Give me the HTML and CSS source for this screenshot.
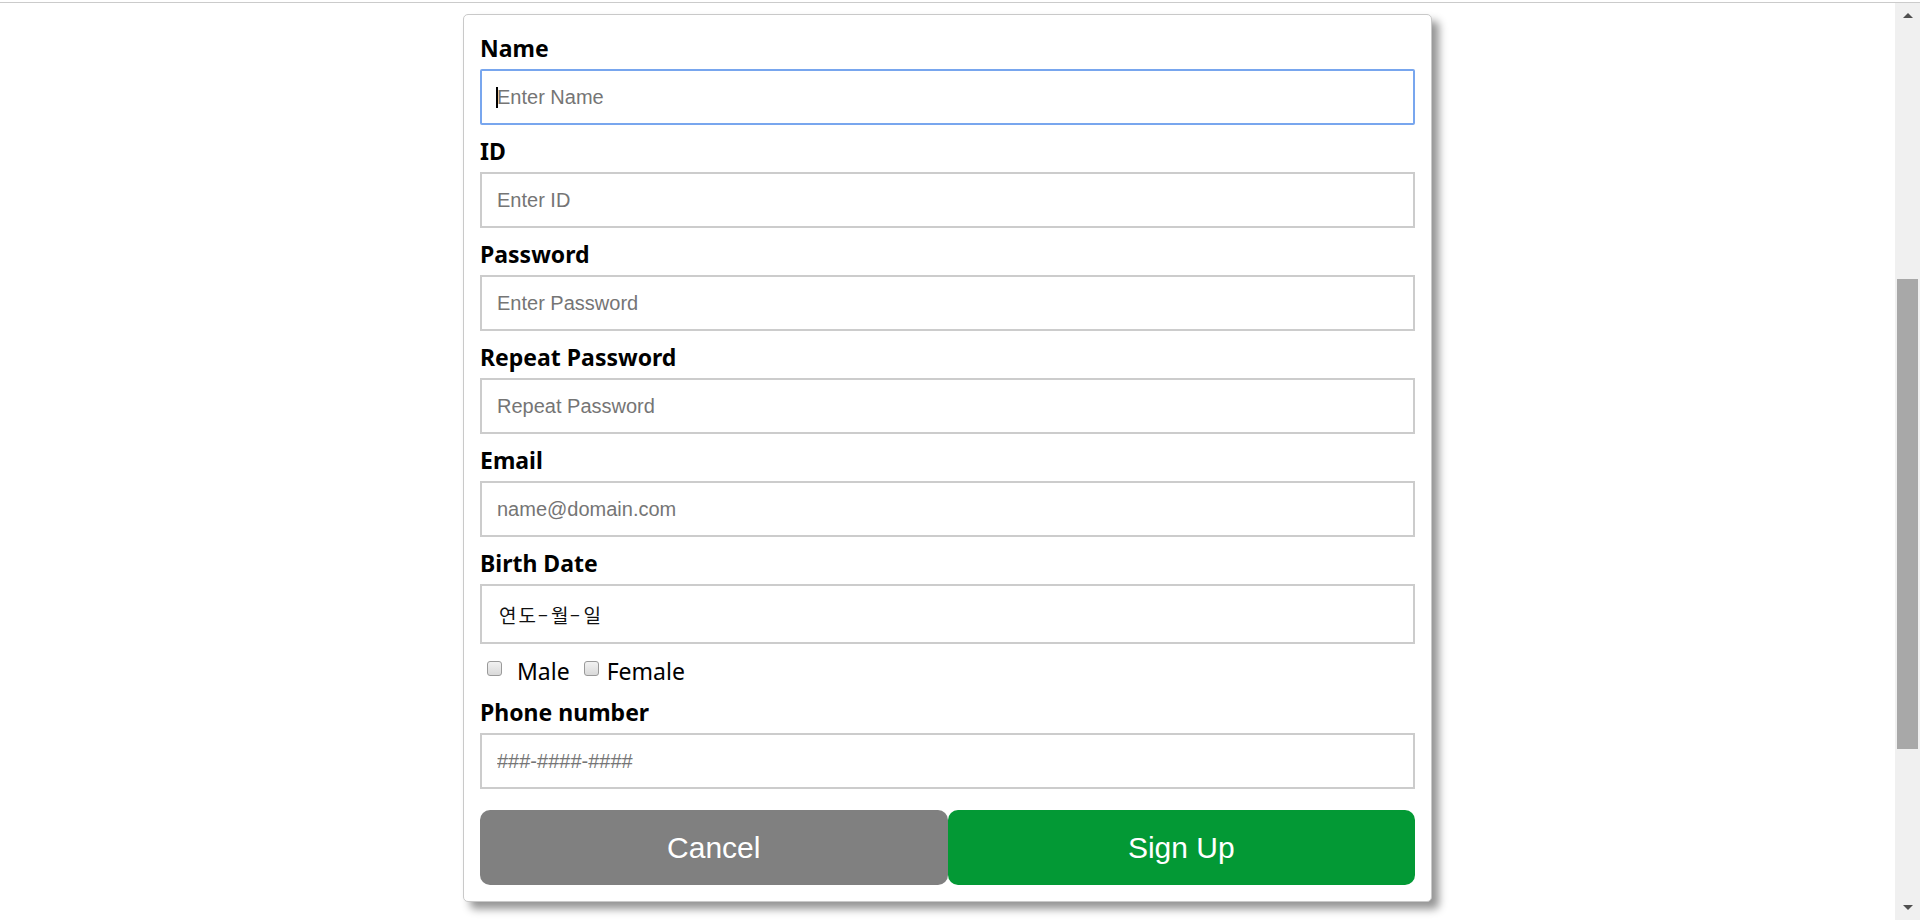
FILE: index.html
```html
<!DOCTYPE html>
<html lang="ko">
<head>
<meta charset="utf-8">
<title>Sign Up</title>
<link rel="stylesheet" href="styles.css">
</head>
<body>
<div class="topline"></div>
<div class="viewport">
  <main class="main">
    <form class="card">
      <label class="lbl" for="name">Name</label>
      <div class="field">
        <input class="inp focused" id="name" type="text" placeholder="Enter Name">
        <span class="caret"></span>
      </div>

      <label class="lbl" for="uid">ID</label>
      <input class="inp" id="uid" type="text" placeholder="Enter ID">

      <label class="lbl" for="psw">Password</label>
      <input class="inp" id="psw" type="password" placeholder="Enter Password">

      <label class="lbl" for="psw2">Repeat Password</label>
      <input class="inp" id="psw2" type="password" placeholder="Repeat Password">

      <label class="lbl" for="email">Email</label>
      <input class="inp" id="email" type="text" placeholder="name@domain.com">

      <label class="lbl">Birth Date</label>
      <div class="inp date"><span class="d-seg">연도</span><span class="d-sep">-</span><span class="d-seg">월</span><span class="d-sep">-</span><span class="d-seg">일</span></div>

      <div class="gender">
        <input type="checkbox" class="chk chk-male" id="male"><label for="male" class="opt opt-male">Male</label>
        <input type="checkbox" class="chk chk-female" id="female"><label for="female" class="opt">Female</label>
      </div>

      <label class="lbl" for="phone">Phone number</label>
      <input class="inp" id="phone" type="text" placeholder="###-####-####">

      <div class="btns">
        <button type="button" class="btn cancel">Cancel</button>
        <button type="button" class="btn signup">Sign Up</button>
      </div>
    </form>
  </main>
  <div class="scrollbar">
    <div class="sb-btn"><span class="arrow-up"></span></div>
    <div class="sb-track"><div class="sb-thumb"></div></div>
    <div class="sb-btn"><span class="arrow-down"></span></div>
  </div>
</div>
</body>
</html>
```

FILE: styles.css
```css
html, body {
  margin: 0;
  padding: 0;
  background: #ffffff;
  height: 920px;
  overflow: hidden;
}

.topline {
  height: 2px;
  border-bottom: 1px solid #cbcbcb;
  background: #ffffff;
}

.viewport {
  display: flex;
  height: 917px;
}

.main {
  flex: 1;
  display: flex;
  justify-content: center;
  align-items: flex-start;
  padding-top: 11px;
}

.card {
  box-sizing: border-box;
  width: 969px;
  padding: 18px 16px 16px 16px;
  border: 1px solid #c9c9c9;
  border-radius: 5px;
  background: #ffffff;
  box-shadow: 7px 7px 9px rgba(0, 0, 0, 0.42);
  display: flex;
  flex-direction: column;
}

.lbl {
  display: block;
  height: 30px;
  line-height: 30px;
  font-family: "Noto Sans", "Noto Sans CJK KR", sans-serif;
  font-weight: 700;
  font-size: 23px;
  color: #000000;
}

.field {
  position: relative;
  margin: 6px 0 11px 0;
}

.inp {
  display: block;
  box-sizing: border-box;
  width: 100%;
  height: 56px;
  margin: 6px 0 11px 0;
  padding: 0 15px;
  border: 2px solid #cccccc;
  border-radius: 0;
  background: #ffffff;
  font-family: "Liberation Sans", Arial, sans-serif;
  font-size: 20px;
  color: #000000;
  outline: none;
}

.field .inp {
  margin: 0;
}

.inp::placeholder {
  color: #757575;
  opacity: 1;
}

.focused {
  border-color: #78a6ee;
  border-radius: 2px;
}

.caret {
  position: absolute;
  left: 16px;
  top: 18px;
  width: 2px;
  height: 21px;
  background: #000000;
}

.date {
  height: 60px;
  display: flex;
  align-items: center;
  padding-left: 17px;
  font-family: "Noto Sans CJK KR", sans-serif;
  font-size: 19px;
  font-weight: 400;
  color: #111111;
}

.d-seg {
  letter-spacing: 2px;
}

.d-sep {
  display: inline-block;
  width: 12px;
  margin-left: -1px;
  margin-right: 2px;
  text-align: center;
  transform: scaleX(1.7);
}

.gender {
  display: flex;
  align-items: center;
  height: 32px;
  margin-bottom: 10px;
  font-family: "Noto Sans", "Noto Sans CJK KR", sans-serif;
  font-size: 23px;
  color: #000000;
}

.chk {
  appearance: none;
  -webkit-appearance: none;
  box-sizing: border-box;
  width: 15px;
  height: 15px;
  margin: 0;
  border: 1px solid #9a9a9a;
  border-radius: 3px;
  background: linear-gradient(#f2f2f2, #d9d9d9);
  position: relative;
  top: -3px;
}

.chk-male {
  margin-left: 7px;
}

.chk-female {
  margin-left: 0;
}

.opt {
  margin-left: 8px;
  margin-right: 14px;
}

.opt-male {
  margin-left: 15px;
}

.btns {
  display: flex;
  margin-top: 10px;
}

.btn {
  flex: 1;
  height: 75px;
  border: none;
  border-radius: 10px;
  color: #ffffff;
  font-family: "Liberation Sans", Arial, sans-serif;
  font-size: 30px;
  padding: 0;
  cursor: pointer;
}

.cancel {
  background: #808080;
}

.signup {
  background: #039935;
}

.scrollbar {
  width: 25px;
  background: #f0f0f0;
  display: flex;
  flex-direction: column;
}

.sb-btn {
  height: 25px;
  display: flex;
  align-items: center;
  justify-content: center;
}

.sb-track {
  flex: 1;
  padding: 251px 2px 0 2px;
}

.sb-thumb {
  height: 470px;
  background: #a8a8a8;
}

.arrow-up {
  width: 0;
  height: 0;
  border-left: 5px solid transparent;
  border-right: 5px solid transparent;
  border-bottom: 5px solid #505050;
}

.arrow-down {
  width: 0;
  height: 0;
  border-left: 5px solid transparent;
  border-right: 5px solid transparent;
  border-top: 5px solid #505050;
}
```
